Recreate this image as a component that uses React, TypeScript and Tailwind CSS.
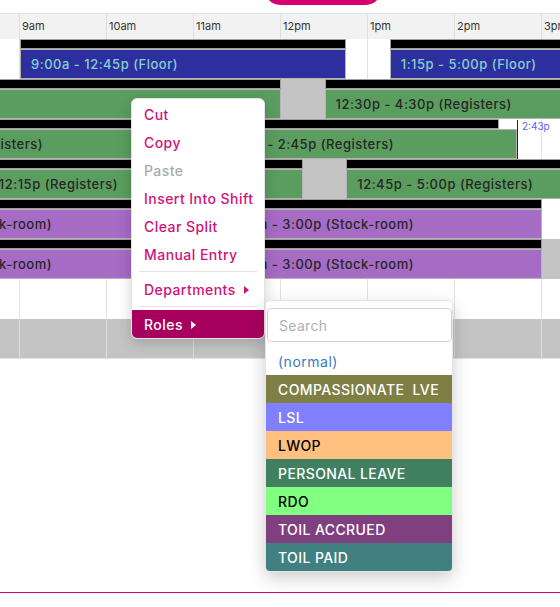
import React from 'react';

type Bar = {
  from: number;
  to: number;
  tone: string;
  label?: string;
  labelEnd?: number;
};

type Row = {
  strips: [number, number][];
  bars: Bar[];
  gaps?: [number, number][];
};

const HOUR = 87;
// x position of a time (decimal hours) on the 9am-based scale
const xOf = (h: number) => 20 + (h - 9) * HOUR;

const hours = ['9am', '10am', '11am', '12pm', '1pm', '2pm', '3pm'];

const BLUE = 'bg-[#2d2f9e] text-[#86d0d0]';
const GREEN = 'bg-[#5b9d5f] text-[#262626]';
const PURPLE = 'bg-[#a66bc5] text-[#262626]';

const rows: Row[] = [
  {
    strips: [
      [9, 12.75],
      [13.25, 18],
    ],
    bars: [
      { from: 9, to: 12.75, tone: BLUE, label: '9:00a - 12:45p (Floor)' },
      { from: 13.25, to: 18, tone: BLUE, label: '1:15p - 5:00p (Floor)' },
    ],
  },
  {
    strips: [
      [5, 12],
      [12.5, 18],
    ],
    gaps: [[12, 12.5]],
    bars: [
      { from: 5, to: 12, tone: GREEN, label: '7:00a - 12:00p (Registers)', labelEnd: -20 },
      { from: 12.5, to: 18, tone: GREEN, label: '12:30p - 4:30p (Registers)' },
    ],
  },
  {
    strips: [[5, 14.5]],
    bars: [
      { from: 5, to: 11, tone: GREEN, label: '7:00a - 11:00a (Registers)', labelEnd: 43 },
      { from: 11, to: 14.717, tone: GREEN, label: '11:00a - 2:45p (Registers)', labelEnd: 394 },
    ],
  },
  {
    strips: [
      [5, 12.25],
      [12.75, 18],
    ],
    gaps: [[12.25, 12.75]],
    bars: [
      { from: 5, to: 12.25, tone: GREEN, label: '7:00a - 12:15p (Registers)', labelEnd: 118 },
      { from: 12.75, to: 18, tone: GREEN, label: '12:45p - 5:00p (Registers)' },
    ],
  },
  {
    strips: [[5, 15]],
    bars: [
      { from: 5, to: 11, tone: PURPLE, label: '7:00a - 11:00a (Stock-room)', labelEnd: 52 },
      { from: 11, to: 15, tone: PURPLE, label: '11:00a - 3:00p (Stock-room)', labelEnd: 414 },
    ],
  },
  {
    strips: [[5, 15]],
    gaps: [[15, 18]],
    bars: [
      { from: 5, to: 11, tone: PURPLE, label: '7:00a - 11:00a (Stock-room)', labelEnd: 52 },
      { from: 11, to: 15, tone: PURPLE, label: '11:00a - 3:00p (Stock-room)', labelEnd: 414 },
    ],
  },
];

const roles = [
  { name: 'COMPASSIONATE  LVE', cls: 'bg-[#7f7f45] text-white' },
  { name: 'LSL', cls: 'bg-[#8080ff] text-white' },
  { name: 'LWOP', cls: 'bg-[#ffc080] text-black' },
  { name: 'PERSONAL LEAVE', cls: 'bg-[#408060] text-white' },
  { name: 'RDO', cls: 'bg-[#80ff80] text-black' },
  { name: 'TOIL ACCRUED', cls: 'bg-[#804080] text-white' },
  { name: 'TOIL PAID', cls: 'bg-[#408080] text-white' },
];

function GridLines({ line }: { line: string }) {
  return (
    <div className="absolute inset-0 flex pointer-events-none">
      <div className="w-[19px] shrink-0" />
      {hours.map((h) => (
        <div key={h} className={`w-[87px] shrink-0 border-l ${line}`} />
      ))}
    </div>
  );
}

function ShiftRow({ row }: { row: Row }) {
  return (
    <div className="relative h-[40px]">
      {row.gaps?.map(([a, b], i) => (
        <div
          key={`g${i}`}
          className="absolute top-0 h-[40px] bg-[#c4c4c4]"
          style={{ left: xOf(a), width: xOf(b) - xOf(a) }}
        />
      ))}
      {row.strips.map(([a, b], i) => (
        <div
          key={`s${i}`}
          className="absolute top-0 h-[10px] bg-black border border-[#9e9e9e]"
          style={{ left: xOf(a), width: xOf(b) - xOf(a) }}
        />
      ))}
      {row.bars.map((bar, i) => {
        const left = xOf(bar.from);
        return (
          <div
            key={`b${i}`}
            className={`absolute top-[10px] h-[30px] border border-[#b5b5b5] overflow-hidden ${bar.tone}`}
            style={{ left, width: xOf(bar.to) - left }}
          >
            {bar.labelEnd !== undefined ? (
              <span
                className="absolute top-[5px] -translate-x-full whitespace-nowrap text-[13px] font-medium tracking-[0.5px]"
                style={{ left: bar.labelEnd - left - 1 }}
              >
                {bar.label}
              </span>
            ) : (
              <span className="absolute top-[5px] left-[10px] whitespace-nowrap text-[13px] font-medium tracking-[0.5px]">
                {bar.label}
              </span>
            )}
          </div>
        );
      })}
    </div>
  );
}

function Caret() {
  return (
    <svg width="5" height="8" viewBox="0 0 5 8" className="ml-[8px] mt-[1px]">
      <path d="M0 0 L5 4 L0 8 Z" fill="currentColor" />
    </svg>
  );
}

function ContextMenu() {
  const item = 'h-[28px] flex items-center px-[12px] whitespace-nowrap';
  return (
    <div className="absolute left-[131px] top-[98px] w-[134px] bg-white rounded-[6px] border border-[#e4e4e4] shadow-[0_4px_14px_rgba(0,0,0,0.18)] pt-[1px] overflow-hidden text-[14px] font-medium tracking-[0.45px] text-[#d1127a]">
      <div className={item}>Cut</div>
      <div className={item}>Copy</div>
      <div className={`${item} text-[#aaaaaa]`}>Paste</div>
      <div className={item}>Insert Into Shift</div>
      <div className={item}>Clear Split</div>
      <div className={item}>Manual Entry</div>
      <div className="mx-[7px] my-[3px] h-px bg-[#e2e2e2]" />
      <div className={item}>
        Departments
        <Caret />
      </div>
      <div className="mx-[7px] my-[3px] h-px bg-[#e2e2e2]" />
      <div className={`${item} bg-[#a8005f] text-white`}>
        Roles
        <Caret />
      </div>
    </div>
  );
}

function RolesMenu() {
  return (
    <div className="absolute left-[265px] top-[300px] w-[188px] bg-white rounded-[5px] border border-[#e4e4e4] shadow-[0_6px_18px_rgba(0,0,0,0.2)] pt-[7px] overflow-hidden text-[14px] font-medium">
      <input
        placeholder="Search"
        className="ml-[1px] w-[185px] h-[34px] rounded-[4px] border border-[#cfcfcf] px-[11px] outline-none placeholder:text-[#b0b0b0] font-normal tracking-[0.3px]"
      />
      <div className="mt-[5px] h-[28px] flex items-center px-[12px] text-[#3b7cc0] font-normal tracking-[0.5px]">(normal)</div>
      {roles.map((r) => (
        <div key={r.name} className={`h-[28px] flex items-center px-[12px] whitespace-pre tracking-[0.4px] ${r.cls}`}>
          {r.name}
        </div>
      ))}
    </div>
  );
}

export default function App() {
  return (
    <div className="relative w-[560px] h-[607px] overflow-hidden bg-white flex flex-col font-['Inter',sans-serif] text-[#333]">
      <div className="h-[13px] shrink-0">
        <div className="ml-[265px] -mt-[25px] w-[116px] h-[30px] rounded-full bg-[#d6006e]" />
      </div>

      <div className="relative flex h-[26px] shrink-0 bg-[#f2f2f2] border-t border-[#e3e3e3]">
        <div className="w-[19px] shrink-0" />
        {hours.map((h) => (
          <div key={h} className="w-[87px] shrink-0 border-l border-[#e0e0e0] pl-[2px] pt-[4px] text-[11px] text-[#333]">
            {h}
          </div>
        ))}
      </div>

      <div className="relative shrink-0">
        <GridLines line="border-[#e2e2e2]" />
        {rows.map((row, i) => (
          <ShiftRow key={i} row={row} />
        ))}
        {/* now marker */}
        <div className="absolute left-[517px] top-[81px] h-[39px] w-px bg-[#1010c8]" />
        <div className="absolute left-[522px] top-[81px] text-[10px] leading-[12px] text-[#6262f0]">2:43p</div>
        <div className="h-[40px]" />
        <div className="relative h-[40px] bg-[#c4c4c4] border-b border-[#e2e2e2]">
          <GridLines line="border-[#dcdcdc]" />
        </div>
      </div>

      <div className="mt-auto mb-[14px] h-px bg-[#d6007a]" />

      <ContextMenu />
      <RolesMenu />
    </div>
  );
}
